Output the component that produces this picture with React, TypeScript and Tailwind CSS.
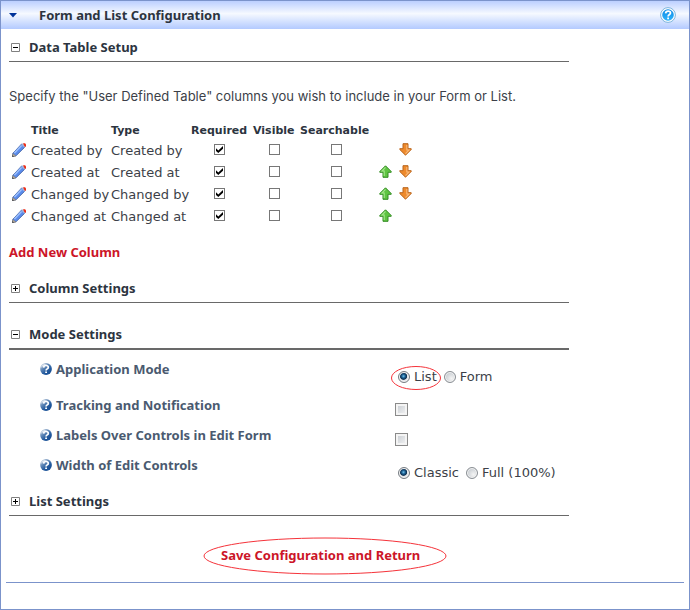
import React, { useState } from 'react';

const columns = [
  { name: 'Created by', required: true, up: false, down: true },
  { name: 'Created at', required: true, up: true, down: true },
  { name: 'Changed by', required: true, up: true, down: true },
  { name: 'Changed at', required: true, up: true, down: false },
];

function Pencil() {
  return (
    <svg width="14" height="14" viewBox="0 0 14 14" aria-hidden="true">
      <path d="M.5 13.5 1 10.2 9.6 1 12.9 4 4.2 12.6Z" fill="#5b8cec" stroke="#2f5299" strokeWidth=".8" />
      <path d="M2.4 10 9.6 2.5" stroke="#9cbffc" strokeWidth="1.6" />
      <path d="M.3 13.8.9 10.6 3.8 13Z" fill="#c9bda8" stroke="#77716a" strokeWidth=".6" />
      <path d="M.3 13.8.7 12.2 1.9 13.2Z" fill="#222" />
      <path d="M9.2 1.7 10.7.2 13.8 3.2 12.4 4.7Z" fill="#9fb4dc" />
      <path d="M11 .2H13L14 1.2V3.8L12.6 3.6Z" fill="#ee2a12" />
    </svg>
  );
}

function Arrow({ down = false }: { down?: boolean }) {
  return (
    <svg width="13" height="13" viewBox="0 0 13 13" className={down ? 'rotate-180' : ''} aria-hidden="true">
      <path
        d="M6.5.8 12.2 6.5V7.3H9V12.3H4V7.3H.8V6.5Z"
        fill={down ? '#ee8a2c' : '#5fc442'}
        stroke={down ? '#b8641c' : '#348c24'}
        strokeWidth="1"
        strokeLinejoin="round"
      />
      <path d="M6.5 2.3 3 6H5.2V11" fill="none" stroke={down ? '#f8b878' : '#a4e68c'} strokeWidth="1.1" />
    </svg>
  );
}

function HeaderHelp() {
  return (
    <svg width="16" height="16" viewBox="0 0 16 16" aria-hidden="true">
      <defs>
        <linearGradient id="head-help" x1="0" y1="0" x2="0" y2="1">
          <stop offset="0" stopColor="#0c8ae6" />
          <stop offset="1" stopColor="#2fb4fb" />
        </linearGradient>
      </defs>
      <circle cx="8" cy="8" r="7.4" fill="#fff" stroke="#7cb4dc" strokeWidth="1" />
      <circle cx="8" cy="8" r="5.8" fill="url(#head-help)" />
      <path d="M5.6 6.4C5.7 4.7 6.8 4.1 8.1 4.1 9.6 4.1 10.5 4.9 10.5 6 10.5 7.6 8.1 7.5 8.1 9.5" fill="none" stroke="#fff" strokeWidth="1.7" />
      <path d="M7.2 10.5h1.8v1.7H7.2z" fill="#fff" />
    </svg>
  );
}

function LabelHelp() {
  return (
    <svg width="12" height="12" viewBox="0 0 12 12" aria-hidden="true">
      <defs>
        <linearGradient id="label-help" x1="0" y1="0" x2=".8" y2="1">
          <stop offset=".1" stopColor="#c8d4e2" />
          <stop offset=".42" stopColor="#5c84b4" />
          <stop offset=".7" stopColor="#235a9e" />
          <stop offset="1" stopColor="#154c92" />
        </linearGradient>
      </defs>
      <circle cx="6" cy="6" r="5.9" fill="url(#label-help)" />
      <path d="M1 5A5 5 0 0 1 7.6 1.2 9 9 0 0 0 1 5Z" fill="#f4f7fb" />
      <path d="M3.6 4.6C3.8 3 4.8 2.5 6 2.5 7.4 2.5 8.3 3.3 8.3 4.4 8.3 5.9 6.1 5.8 6.1 7.4" fill="none" stroke="#fff" strokeWidth="1.7" />
      <path d="M5.2 8.4h1.8v1.7H5.2z" fill="#fff" />
    </svg>
  );
}

function Section({ title, open = false, heavy = false, className = '' }: { title: string; open?: boolean; heavy?: boolean; className?: string }) {
  return (
    <h2 className={`${heavy ? 'border-b-2' : 'border-b'} border-[#696969] ${className}`}>
      <button type="button" aria-expanded={open} className="flex h-7 items-center gap-[9px] pl-[2px] font-['Noto_Sans',sans-serif] text-[13px] font-bold text-[#2c3440]">
        <svg width="9" height="9" viewBox="0 0 9 9" aria-hidden="true">
          <path d="M.5.5h8v8h-8z" fill="#fff" stroke="#808080" />
          <path d={open ? 'M2 4.5h5' : 'M2 4.5h5M4.5 2v5'} stroke="#000" />
        </svg>
        {title}
      </button>
    </h2>
  );
}

function TableCheck({ label, on = false }: { label: string; on?: boolean }) {
  return (
    <span className="relative mx-auto block size-[11px]">
      <input
        type="checkbox"
        defaultChecked={on}
        aria-label={label}
        className="peer block size-[11px] appearance-none border border-[#777] bg-white"
      />
      <svg width="11" height="11" viewBox="0 0 11 11" className="pointer-events-none absolute inset-0 hidden peer-checked:block" aria-hidden="true">
        <path d="M2 4.2 4.3 6.4 9 2V4.7L4.3 9 2 6.9Z" fill="#000" />
      </svg>
    </span>
  );
}

function Radio({ name, label, checked, onPick, circled = false }: { name: string; label: string; checked: boolean; onPick: () => void; circled?: boolean }) {
  return (
    <label className="relative flex h-5 items-center gap-1">
      <input
        type="radio"
        name={name}
        checked={checked}
        onChange={onPick}
        className="size-3 appearance-none rounded-full border border-[#8a8f94] bg-[radial-gradient(circle_at_65%_65%,#f4f4f4_0,#c9ced3_70%)] shadow-[inset_0_0_0_1px_#f4f4f4] checked:border-[#767c82] checked:bg-[radial-gradient(circle_at_45%_42%,#72c4ee_0,#1c5f92_22%,#0c2f50_40%,#e3e6e9_50%)]"
      />
      {label}
      {circled && (
        <svg width="52" height="26" viewBox="0 0 52 26" className="pointer-events-none absolute -top-[2px] -left-[8px] max-w-none" aria-hidden="true">
          <ellipse cx="26" cy="13" rx="24.5" ry="11.5" fill="none" stroke="#f5333a" />
        </svg>
      )}
    </label>
  );
}

function Setting({ label, className, children }: { label: string; className: string; children: React.ReactNode }) {
  return (
    <div className={`flex items-start pl-[31px] ${className}`}>
      <div className="flex h-5 w-[355px] shrink-0 items-center gap-1 font-['Noto_Sans',sans-serif] text-[13px] font-bold text-[#4a5a70]">
        <LabelHelp />
        {label}
      </div>
      <div className="flex pt-2">{children}</div>
    </div>
  );
}

function BoxCheck({ label }: { label: string }) {
  return (
    <input
      type="checkbox"
      aria-label={label}
      className="block size-[13px] appearance-none border border-[#8a8a8a] bg-linear-to-br from-[#c4c9cf] to-[#f6f6f6] shadow-[inset_0_0_0_2px_#f4f4f4] checked:from-[#1c5f92]"
    />
  );
}

export default function App() {
  const [mode, setMode] = useState('List');
  const [width, setWidth] = useState('Classic');
  return (
    <main className="border border-[#7b93cb] bg-white font-['DejaVu_Sans',Verdana,sans-serif] text-[13px] leading-5 text-[#3c3f48]">
      <header className="flex h-7 items-center bg-linear-to-b from-[#bccfff] via-[#f6f9ff] via-45% to-[#b3caff] pr-[13px] pl-2">
        <button type="button" aria-label="Collapse" className="w-[30px]">
          <svg width="8" height="5" viewBox="0 0 8 5" aria-hidden="true">
            <path d="M0 0h8L4 4.5Z" fill="#003399" />
          </svg>
        </button>
        <h1 className="flex-1 font-['Noto_Sans',sans-serif] text-[13px] font-bold text-[#2c3440]">Form and List Configuration</h1>
        <button type="button" aria-label="Help">
          <HeaderHelp />
        </button>
      </header>

      <div className="max-w-[568px] pt-1 pl-2">
        <Section title="Data Table Setup" open />
        <p className="mt-6 font-['Inter',sans-serif] leading-5 whitespace-nowrap">Specify the "User Defined Table" columns you wish to include in your Form or List.</p>

        <table className="mt-4 w-[408px] table-fixed text-left">
          <colgroup>
            <col className="w-[22px]" />
            <col className="w-[80px]" />
            <col className="w-[80px]" />
            <col className="w-[62px]" />
            <col className="w-[47px]" />
            <col className="w-[77px]" />
            <col className="w-[20px]" />
            <col className="w-[20px]" />
          </colgroup>
          <thead className="text-[11px] leading-[18px] whitespace-nowrap text-[#2c3440]">
            <tr>
              <td />
              <th>Title</th>
              <th>Type</th>
              <th>Required</th>
              <th>Visible</th>
              <th>Searchable</th>
              <td />
              <td />
            </tr>
          </thead>
          <tbody>
            {columns.map((c) => (
              <tr key={c.name} className="h-[22px] whitespace-nowrap">
                <td className="pb-[3px] pl-[3px]">
                  <button type="button" aria-label={`Edit ${c.name}`} className="block">
                    <Pencil />
                  </button>
                </td>
                <td>{c.name}</td>
                <td>{c.name}</td>
                <td className="pr-[5px] pb-[3px]"><TableCheck label={`${c.name} required`} on={c.required} /></td>
                <td className="pr-1 pb-[3px]"><TableCheck label={`${c.name} visible`} /></td>
                <td className="pr-1 pb-[3px]"><TableCheck label={`${c.name} searchable`} /></td>
                <td className="pb-[3px] pl-[2px]">
                  {c.up && <button type="button" aria-label={`Move ${c.name} up`} className="block"><Arrow /></button>}
                </td>
                <td className="pb-[3px] pl-[2px]">
                  {c.down && <button type="button" aria-label={`Move ${c.name} down`} className="block"><Arrow down /></button>}
                </td>
              </tr>
            ))}
          </tbody>
        </table>

        <a href="#add" className="mt-[14px] block w-fit font-['Noto_Sans',sans-serif] text-[13px] leading-5 font-bold text-[#cc1528]">Add New Column</a>

        <Section title="Column Settings" className="mt-3" />
        <Section title="Mode Settings" open heavy className="mt-[17px]" />

        <div className="pt-[9px]">
          <Setting label="Application Mode" className="h-9">
            <div className="flex gap-[7px] pl-[3px]">
              <Radio name="mode" label="List" circled checked={mode === 'List'} onPick={() => setMode('List')} />
              <Radio name="mode" label="Form" checked={mode === 'Form'} onPick={() => setMode('Form')} />
            </div>
          </Setting>
          <Setting label="Tracking and Notification" className="h-[30px]">
            <BoxCheck label="Tracking and Notification" />
          </Setting>
          <Setting label="Labels Over Controls in Edit Form" className="h-[30px]">
            <BoxCheck label="Labels Over Controls in Edit Form" />
          </Setting>
          <Setting label="Width of Edit Controls" className="h-8">
            <div className="flex gap-[7px] pl-[3px]">
              <Radio name="width" label="Classic" checked={width === 'Classic'} onPick={() => setWidth('Classic')} />
              <Radio name="width" label="Full (100%)" checked={width === 'Full'} onPick={() => setWidth('Full')} />
            </div>
          </Setting>
        </div>

        <Section title="List Settings" />

        <a href="#save" className="relative mt-[29px] ml-[212px] block w-fit font-['Noto_Sans',sans-serif] text-[13px] leading-5 font-bold text-[#cc1528]">
          Save Configuration and Return
          <svg width="244" height="38" viewBox="0 0 244 38" className="pointer-events-none absolute -top-2 -left-[18px] max-w-none" aria-hidden="true">
            <ellipse cx="122" cy="19" rx="121" ry="18" fill="none" stroke="#f5333a" />
          </svg>
        </a>
      </div>
      <hr className="mx-[5px] mt-[17px] mb-[26px] border-[#7b93cb]" />
    </main>
  );
}
